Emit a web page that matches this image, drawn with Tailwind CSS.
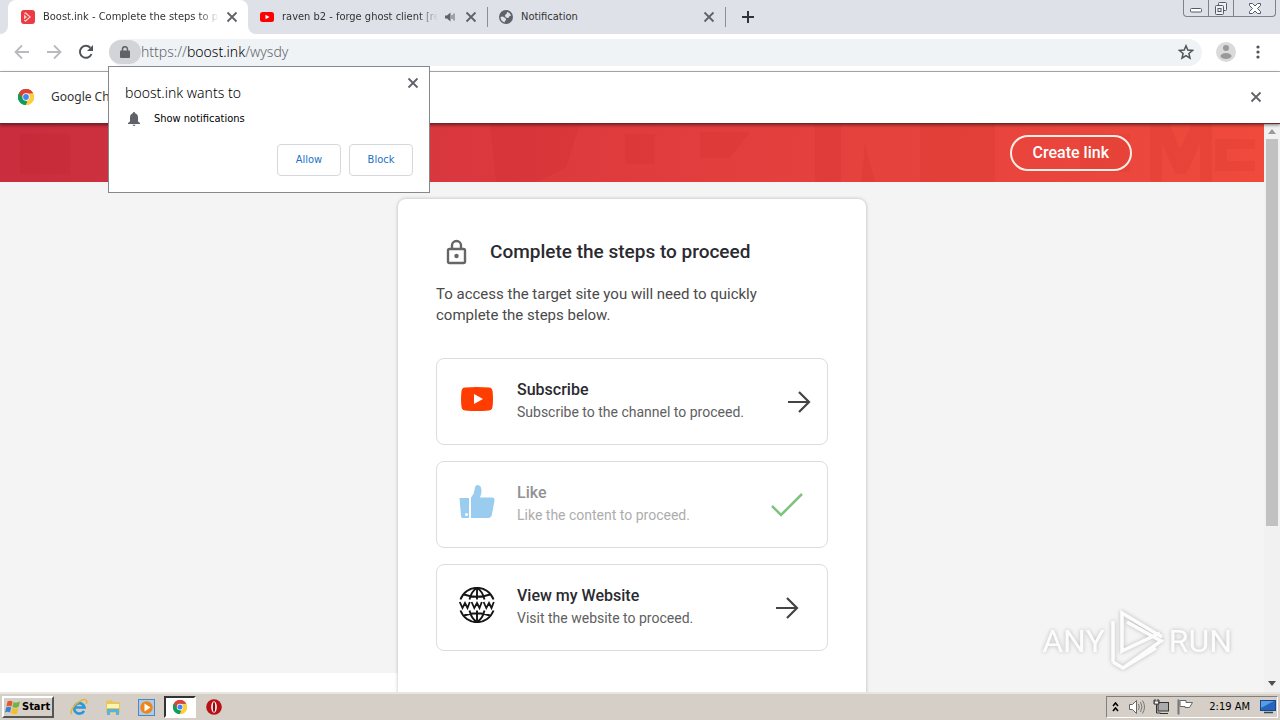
<!DOCTYPE html>
<html lang="en">
<head>
<meta charset="utf-8">
<title>Boost.ink - Complete the steps to proceed</title>
<script src="https://cdn.jsdelivr.net/npm/@tailwindcss/browser@4"></script>
</head>
<body class="relative flex h-screen flex-col overflow-hidden bg-white font-['DejaVu_Sans_Condensed','DejaVu_Sans',sans-serif] text-[11px] text-[#333]">

<svg class="hidden" aria-hidden="true">
  <symbol id="x" viewBox="0 0 12 12"><path d="M1.500 1.500l9 9M10.500 1.500l-9 9" stroke="#5f6368" stroke-width="1.800" fill="none"/></symbol>
  <symbol id="chrome" viewBox="0 0 48 48">
    <path d="M24 24L3.200 12A24 24 0 0 1 44.800 12Z" fill="#db4437"/>
    <path d="M24 24L44.800 12A24 24 0 0 1 24 48Z" fill="#ffcd40"/>
    <path d="M24 24L24 48A24 24 0 0 1 3.200 12Z" fill="#0f9d58"/>
    <path d="M24 13h22a24 24 0 0 1-22 35l10-18z" fill="#ffcd40"/>
    <path d="M3.200 12L14 30l10 6 4 2-5 10A24 24 0 0 1 3.200 12Z" fill="#0f9d58"/>
    <path d="M24 13h21.300A24 24 0 0 0 3.200 12l10.500 15z" fill="#db4437"/>
    <circle cx="24" cy="24" r="11" fill="#fff"/><circle cx="24" cy="24" r="8.700" fill="#4285f4"/>
  </symbol>
  <symbol id="arrow" viewBox="0 0 24 24"><path d="M1 12h21M12 2l10 10-10 10" stroke="#444" stroke-width="2.200" fill="none"/></symbol>
</svg>

<!-- Tab strip -->
<header class="flex h-[34px] shrink-0 items-stretch bg-[#dee1e8]">
  <div class="w-2 shrink-0 bg-white"><div class="h-full rounded-br-lg bg-[#dee1e8]"></div></div>
  <div class="flex w-60 shrink-0 items-center rounded-t-lg bg-white pr-2.5 pl-[13px]">
    <svg class="size-3.5 shrink-0" viewBox="0 0 14 14"><rect width="14" height="14" rx="3" fill="#ee3a44"/><path d="M4.500 2l5.500 5-5.500 5-1.500-1.500V3.500z" fill="#fbd0c8"/><path d="M3.500 4L7 7l-3.500 3" stroke="#ee3a44" stroke-width="1.600" fill="none"/></svg>
    <span class="ml-2 w-[176px] overflow-hidden whitespace-nowrap [mask-image:linear-gradient(to_right,#000_88%,transparent)]">Boost.ink - Complete the steps to pr</span>
    <button class="ml-auto" aria-label="Close tab"><svg class="size-3"><use href="#x"/></svg></button>
  </div>
  <div class="flex w-[239px] shrink-0 items-center bg-white"><div class="flex h-full w-full items-center rounded-bl-lg bg-[#dee1e8] pr-2.5 pl-3">
    <svg class="size-3.5 shrink-0" viewBox="0 0 14 14"><rect y="2" width="14" height="10" rx="2.500" fill="#f00"/><path d="M5.500 4.700L9.500 7l-4 2.300z" fill="#fff"/></svg>
    <span class="ml-2 w-[156px] overflow-hidden whitespace-nowrap [mask-image:linear-gradient(to_right,#000_88%,transparent)]">raven b2 - forge ghost client [re</span>
    <svg class="ml-1.5 size-3 shrink-0" viewBox="0 0 12 12"><path d="M1 4.500h2L6.500 1.500v9L3 7.500H1z" fill="#5f6368"/><path d="M8 4v4M10 2.500v7" stroke="#5f6368"/></svg>
    <button class="ml-auto" aria-label="Close tab"><svg class="size-3"><use href="#x"/></svg></button>
  </div></div>
  <div class="my-auto h-5 w-px bg-[#8b8e93]"></div>
  <div class="flex w-[237px] shrink-0 items-center pr-2.5 pl-[11px]">
    <svg class="size-3.5 shrink-0" viewBox="0 0 14 14"><circle cx="7" cy="7" r="7" fill="#5f6368"/><path d="M1.500 7q2-1 4 .5t1.500 2.500q-1.500 1-1.500 2.500Q1.500 11 1.500 7zM8 2q3 .5 4.200 3.500-2 0-2.200 1.500T7 7.500Q5 6 6.500 4.500 8 4 8 2z" fill="#dee1e8"/></svg>
    <span class="ml-2 whitespace-nowrap">Notification</span>
    <button class="ml-auto" aria-label="Close tab"><svg class="size-3"><use href="#x"/></svg></button>
  </div>
  <div class="my-auto h-5 w-px bg-[#8b8e93]"></div>
  <button class="ml-4 flex items-center" aria-label="New tab"><svg class="size-3" viewBox="0 0 12 12"><path d="M6 0v12M0 6h12" stroke="#30343a" stroke-width="2"/></svg></button>
  <div class="mr-1 ml-auto flex h-[17px] items-stretch divide-x divide-[#7d828c] overflow-hidden rounded-b border border-t-0 border-[#7d828c]">
    <button class="flex w-[25px] items-center justify-center" aria-label="Minimize"><svg class="mt-1 size-3" viewBox="0 0 12 12"><rect x=".5" y="4.500" width="11" height="3.500" rx="1" fill="#fff" stroke="#555b66"/></svg></button>
    <button class="flex w-[25px] items-center justify-center" aria-label="Restore"><svg class="h-[13px] w-3.5" viewBox="0 0 14 13"><g fill="#eef0f4" stroke="#555b66"><rect x="4.500" y=".5" width="8" height="8" rx="1"/><rect x="1.500" y="3.500" width="8" height="9" rx="1"/><rect x="4" y="6.500" width="3" height="3"/></g></svg></button>
    <button class="flex w-[41px] items-center justify-center" aria-label="Close window"><svg class="h-[11px] w-3" viewBox="0 0 12 11"><path d="M.5.5h3L6 3l2.500-2.500h3v2L8.500 5.500l3 3v2h-3L6 8l-2.500 2.500h-3v-2l3-3-3-3z" fill="#fff" stroke="#555b66"/></svg></button>
  </div>
</header>

<!-- Toolbar -->
<nav class="flex h-[38px] shrink-0 items-center border-b border-[#b3b3b3] bg-white pb-px pl-3.5">
  <button aria-label="Back"><svg class="size-4" viewBox="0 0 16 16"><path d="M15 8H2M8 1.500L1.500 8 8 14.500" stroke="#b8babd" stroke-width="1.800" fill="none"/></svg></button>
  <button class="ml-4" aria-label="Forward"><svg class="size-4" viewBox="0 0 16 16"><path d="M1 8h13M8 1.500L14.500 8 8 14.500" stroke="#b8babd" stroke-width="1.800" fill="none"/></svg></button>
  <button class="ml-4" aria-label="Reload"><svg class="size-4" viewBox="0 0 16 16"><path d="M13.500 10A6 6 0 1 1 12.300 3.700" stroke="#505459" stroke-width="2" fill="none"/><path d="M15 1v6H9z" fill="#505459"/></svg></button>
  <div class="ml-[15px] flex h-[27px] flex-1 items-center rounded-full bg-[#f0f3f6] pr-2">
    <button class="flex h-6 w-8 items-center justify-center rounded-full bg-[#d2d4d7]" aria-label="Site information"><svg class="h-3 w-2.5" viewBox="0 0 10 12"><rect y="4.500" width="10" height="7.500" rx="1" fill="#5f6368"/><path d="M2.500 5V3.200a2.500 2.500 0 0 1 5 0V5" stroke="#5f6368" stroke-width="1.500" fill="none"/></svg></button>
    <span class="font-['Noto_Sans',sans-serif] text-sm font-light text-[#62666b]">https://<span class="text-[#000]">boost.ink</span>/wysdy</span>
    <button class="ml-auto" aria-label="Bookmark"><svg class="size-4" viewBox="0 0 16 16"><path d="M8 1.800l1.800 4.300 4.700.4-3.600 3 1.100 4.600-4-2.500-4 2.500 1.100-4.600-3.600-3 4.700-.4z" stroke="#505459" stroke-width="1.500" fill="none"/></svg></button>
  </div>
  <button class="ml-3.5" aria-label="Profile"><svg class="size-5" viewBox="0 0 20 20"><circle cx="10" cy="10" r="10" fill="#dadada"/><circle cx="10" cy="6" r="3" fill="#999"/><ellipse cx="10" cy="14" rx="5.500" ry="3" fill="#999"/></svg></button>
  <button class="mr-5 ml-5" aria-label="Menu"><svg class="h-3.5 w-1" viewBox="0 0 4 14"><g fill="#505459"><circle cx="2" cy="2" r="1.600"/><circle cx="2" cy="7" r="1.600"/><circle cx="2" cy="12" r="1.600"/></g></svg></button>
</nav>

<!-- Info bar -->
<section class="z-10 flex h-[52px] shrink-0 items-center border-b border-[#6e2a2a] bg-white px-[18px] pb-px shadow-[0_1px_3px_rgba(0,0,0,0.5)]">
  <svg class="size-4"><use href="#chrome"/></svg>
  <span class="ml-[17px] font-['Noto_Sans',sans-serif] text-xs">Google Ch</span>
  <button class="ml-auto" aria-label="Dismiss"><svg class="size-3"><use href="#x"/></svg></button>
</section>

<!-- Page -->
<div class="flex min-h-0 flex-1 font-[Roboto,sans-serif]">
  <div class="flex min-w-0 flex-1 flex-col bg-[#f4f4f4]">
    <div class="relative flex h-[58px] shrink-0 items-center justify-end overflow-hidden bg-linear-to-r from-[#c92d3e] via-[#e03c3e] to-[#ef4a3c] pr-[132px]">
      <svg class="absolute inset-0 h-full w-full" viewBox="0 0 1264 58" preserveAspectRatio="none" aria-hidden="true"><g fill="#a81010" opacity=".07"><path d="M490 0h90l-14 44-30 14h-40zM625 10h30v30h-30zM700 8h50l-20 26h-30zM815 0h26v58h-26zM865 20l10 38h-14zM920 0h75v58h-75zM1080 10h50v38h-50zM1150 0h20l10 25 12-25h20v58h-12V20l-14 30h-10l-14-30v38h-12zM1215 15h40v10h-28v12h28v10h-40zM20 10h50v40h-50z"/></g></svg>
      <a href="#" class="relative flex h-9 items-center rounded-full border-2 border-[#fdeee8] px-[21px] text-base font-medium text-white">Create link</a>
    </div>
    <div class="flex min-h-0 flex-1">
      <div class="flex flex-1 flex-col justify-end"><div class="h-[19px] bg-white"></div></div>
      <main class="mt-[17px] w-[468px] overflow-hidden rounded-t-lg bg-white px-[38px] pt-10 shadow-[0_0_3px_1px_rgba(0,0,0,0.16)]">
        <div class="flex items-center">
          <svg class="ml-2 h-[26px] w-6" viewBox="0 0 24 26"><rect x="4" y="10" width="17" height="14" rx="1.500" fill="none" stroke="#666" stroke-width="2.400"/><path d="M8 10V6.500a4.500 4.500 0 0 1 9 0V10" fill="none" stroke="#666" stroke-width="2.400"/><circle cx="12.500" cy="17" r="2.200" fill="#666"/></svg>
          <h1 class="ml-[22px] text-[19px] leading-[26px] font-medium whitespace-nowrap text-[#2a2a30]">Complete the steps to proceed</h1>
        </div>
        <p class="mt-[19px] text-[15px] leading-[21px] text-[#4a4a4a]">To access the target site you will need to quickly<br>complete the steps below.</p>
        <div class="mt-8 flex flex-col gap-4">
          <a href="#" class="flex h-[87px] items-center rounded-lg border border-[#ddd] pr-4 pl-6">
            <svg class="mb-1.5 h-6 w-8" viewBox="0 0 32 24"><path d="M4 .6Q16-.6 28 .6 31 1 31.500 4 32.500 12 31.500 20 31 23 28 23.400 16 24.600 4 23.400 1 23 .5 20-.5 12 .5 4 1 1 4 .6z" fill="#ff3d00"/><path d="M13 7l9 5-9 5z" fill="#fff"/></svg>
            <span class="mb-0.5 ml-6 flex flex-col"><span class="text-base leading-6 font-medium text-[#2a2a30]">Subscribe</span><span class="text-sm leading-[21px] text-[#606060]">Subscribe to the channel to proceed.</span></span>
            <svg class="ml-auto size-6"><use href="#arrow"/></svg>
          </a>
          <a href="#" class="flex h-[87px] items-center rounded-lg border border-[#ddd] pr-6 pl-[22px]">
            <svg class="mb-1.5 h-9 w-9" viewBox="0 0 36 36"><path d="M.5 14H10v20H3.500Q2 34 2 32z" fill="#99ccef"/><path d="M12 13.500q3-3 3.500-7.500Q16 1 18.500 1q4 0 4 6 0 3-1.500 6.500H33q3 0 2.500 3l-2.500 13.500q-.5 4-4 4H12z" fill="#99ccef"/><circle cx="7.500" cy="30.500" r="1.500" fill="#fff"/></svg>
            <span class="mb-0.5 ml-[22px] flex flex-col"><span class="text-base leading-6 font-medium text-[#929292]">Like</span><span class="text-sm leading-[21px] text-[#adadad]">Like the content to proceed.</span></span>
            <svg class="ml-auto h-6 w-8" viewBox="0 0 32 24"><path d="M1 13l9 9L31 1" stroke="#7cc47f" stroke-width="2.500" fill="none"/></svg>
          </a>
          <a href="#" class="flex h-[87px] items-center rounded-lg border border-[#ddd] pr-7 pl-[22px]">
            <svg class="mb-1.5 size-9" viewBox="0 0 36 36"><g fill="none" stroke="#151515" stroke-width="1.900"><path d="M1.500 12.500a17.500 17.500 0 0 1 33 0M1.500 23.500a17.500 17.500 0 0 0 33 0M18 1v11.500M18 23.500V35M10.500 12.500Q12.500 4 18 1q5.500 3 7.500 11.500M10.500 23.500Q12.500 32 18 35q5.500-3 7.500-11.500M5 7.500q13 4.500 26 0M5 28.500q13-4.500 26 0"/><path d="M.8 15l2.700 6L6 16l2.500 5 2.300-6M12.600 15l2.700 6L18 16l2.500 5 2.300-6M24.600 15l2.700 6L30 16l2.500 5 2.300-6" stroke-width="1.800"/></g></svg>
            <span class="mb-0.5 ml-[22px] flex flex-col"><span class="text-base leading-6 font-medium text-[#2a2a30]">View my Website</span><span class="text-sm leading-[21px] text-[#606060]">Visit the website to proceed.</span></span>
            <svg class="ml-auto size-6"><use href="#arrow"/></svg>
          </a>
        </div>
      </main>
      <div class="flex-1"></div>
    </div>
  </div>
  <!-- Scrollbar -->
  <div class="flex w-4 shrink-0 flex-col items-center bg-[#f1f1f1]">
    <svg class="mt-[5px] h-[5px] w-2" viewBox="0 0 8 5"><path d="M0 5l4-5 4 5z" fill="#999"/></svg>
    <div class="mt-[5px] h-[387px] w-3 bg-[#c1c1c1]"></div>
    <svg class="mt-auto mb-1.5 h-[5px] w-2" viewBox="0 0 8 5"><path d="M0 0l4 5 4-5z" fill="#505050"/></svg>
  </div>
</div>

<!-- Taskbar -->
<footer class="flex h-7 shrink-0 items-center border-t-2 border-[#e9e6e0] bg-[#d5cfc7] text-black">
  <button class="ml-0.5 flex h-[22px] items-center gap-px border-2 border-t-white border-r-[#555] border-b-[#555] border-l-white pr-0.5 pl-px font-['DejaVu_Sans_Condensed',sans-serif] text-[11px] font-bold">
    <svg class="size-4" viewBox="0 0 16 16"><path d="M2.500 2.500Q5 1 7.500 2.500L6.500 7.500Q4 6 1.500 7.500z" fill="#e8552c"/><path d="M8.500 3Q11 4.500 15 2.500L13.500 8Q10 9.500 7.500 8z" fill="#6fb43f"/><path d="M1.200 8.500q2.500-1.500 5 0L5 13.500q-2.500-1.500-5 0z" fill="#3f7fd0"/><path d="M7.300 9q2.700 1.500 6 0L12 14.500q-3 1.500-6-.5z" fill="#f5bd2a"/></svg>Start
  </button>
  <button class="ml-4" aria-label="Internet Explorer"><svg class="size-[18px]" viewBox="0 0 18 18"><path d="M14 12.800A5.200 5.200 0 1 1 14.500 9.500H5" stroke="#2d97dc" stroke-width="2.600" fill="none"/><path d="M2 16Q-1 14 5 7 13 0 16 2q1.500 1 0 4" stroke="#e7b52c" stroke-width="1.500" fill="none"/></svg></button>
  <button class="ml-4" aria-label="Explorer"><svg class="size-[18px]" viewBox="0 0 18 18"><path d="M2 3l6-1 1 2h7v11H2z" fill="#e8c65e"/><path d="M3 6h12v4H3z" fill="#fff3b0"/><path d="M3 17v-6h12v6h-3v-3H6v3z" fill="#55b4e4"/></svg></button>
  <button class="ml-4" aria-label="Media Player"><svg class="size-[17px]" viewBox="0 0 17 17"><rect x=".5" y=".5" width="16" height="16" fill="#a9cdf0" stroke="#5584bb"/><circle cx="8.500" cy="8.500" r="6.200" fill="#f18415"/><path d="M6.500 4.500l6 4-6 4z" fill="#fff"/></svg></button>
  <button class="ml-[9px] flex h-[22px] w-8 items-center justify-center border-2 border-t-[#333] border-r-white border-b-white border-l-[#333] bg-white" aria-label="Chrome"><svg class="size-3.5"><use href="#chrome"/></svg></button>
  <button class="ml-2.5" aria-label="Opera"><svg class="size-4" viewBox="0 0 16 16"><circle cx="8" cy="8" r="7.800" fill="#b91018"/><ellipse cx="8" cy="8" rx="2.800" ry="5.800" fill="#fff"/><ellipse cx="8" cy="8" rx="1.200" ry="5" fill="#8d0b12"/></svg></button>
  <div class="mr-0.5 ml-auto flex h-[22px] items-center border border-t-[#808080] border-r-white border-b-white border-l-[#808080] pr-px pl-[5px]">
    <svg class="h-2.5 w-[7px]" viewBox="0 0 7 10"><path d="M1 4l2.500-3L6 4M1 9l2.500-3L6 9" stroke="#000" stroke-width="1.600" fill="none"/></svg>
    <svg class="ml-2.5 size-4" viewBox="0 0 16 16"><path d="M.5 5.500h3l4-4v13l-4-4h-3z" fill="#fff" stroke="#666"/><path d="M9.500 5q1.500 3 0 6M11.500 3q3 5 0 10M13.500 1.500q4 6.500 0 13" stroke="#777" fill="none"/></svg>
    <svg class="ml-2 size-4" viewBox="0 0 16 16"><rect x="5" y="3.500" width="10.500" height="8.500" fill="#aaa" stroke="#333"/><path d="M7 14.500h8M1 1v4h5V1M3.500 5v9h4M2 0v2M5 0v2" stroke="#333" fill="none"/><path d="M1.500 2h4v3h-4z" fill="#fff" stroke="#555"/></svg>
    <svg class="ml-2 size-4" viewBox="0 0 16 16"><path d="M1.500.5v15" stroke="#777" stroke-width="2"/><path d="M3 1.500h6v2h6.500l-3 5H8v-1H3z" fill="#fff" stroke="#666"/></svg>
    <span class="ml-4">2:19 AM</span>
    <svg class="ml-2.5 h-3.5 w-4" viewBox="0 0 16 14"><rect x=".5" y=".5" width="15" height="10" fill="#2465bd" stroke="#17468a"/><path d="M1 1h13L1 8z" fill="#5b9be3"/><path d="M4 12.500h9" stroke="#345" stroke-width="1.500"/></svg>
  </div>
</footer>

<!-- Permission prompt -->
<div role="dialog" aria-label="boost.ink wants to" class="absolute top-[66px] left-[108px] z-20 flex w-[322px] flex-col border border-[#85888c] bg-white px-4 pb-4">
  <button class="absolute top-2.5 right-2.5" aria-label="Close"><svg class="size-3"><use href="#x"/></svg></button>
  <h2 class="mt-4 font-['Noto_Sans',sans-serif] text-sm leading-5 font-light text-black">boost.ink wants to</h2>
  <div class="mt-2 flex h-4 items-center text-black"><svg class="ml-[3px] h-3.5 w-3" viewBox="0 0 12 14"><path d="M6 0q1 0 1.200 1.200Q10 2.200 10 5.500v4l2 1.500v1H0v-1l2-1.500v-4Q2 2.200 4.800 1.200 5 0 6 0zM4.500 12.700h3Q7 14 6 14t-1.500-1.300z" fill="#5f6368"/></svg><span class="ml-3.5">Show notifications</span></div>
  <div class="mt-[17px] flex justify-end gap-2 text-[#1a73c8]">
    <button class="h-8 w-16 rounded border border-[#d5d8dc]">Allow</button>
    <button class="h-8 w-16 rounded border border-[#d5d8dc]">Block</button>
  </div>
</div>

<!-- Watermark -->
<div class="absolute right-12 bottom-12 flex items-center gap-1 font-[Roboto,sans-serif] text-[32px] leading-[62px] text-white opacity-80 [filter:drop-shadow(0_0_2px_rgba(0,0,0,0.3))]">
  <span>ANY</span>
  <svg class="h-[62px] w-14" viewBox="0 0 56 62"><path d="M4 52V11M13 16V3l40 24M13 3v38l38-18M14 58l38-27L18 12M4 52l10 6 33-20" fill="none" stroke="#fff" stroke-width="3.500"/></svg>
  <span>RUN</span>
</div>
</body>
</html>
